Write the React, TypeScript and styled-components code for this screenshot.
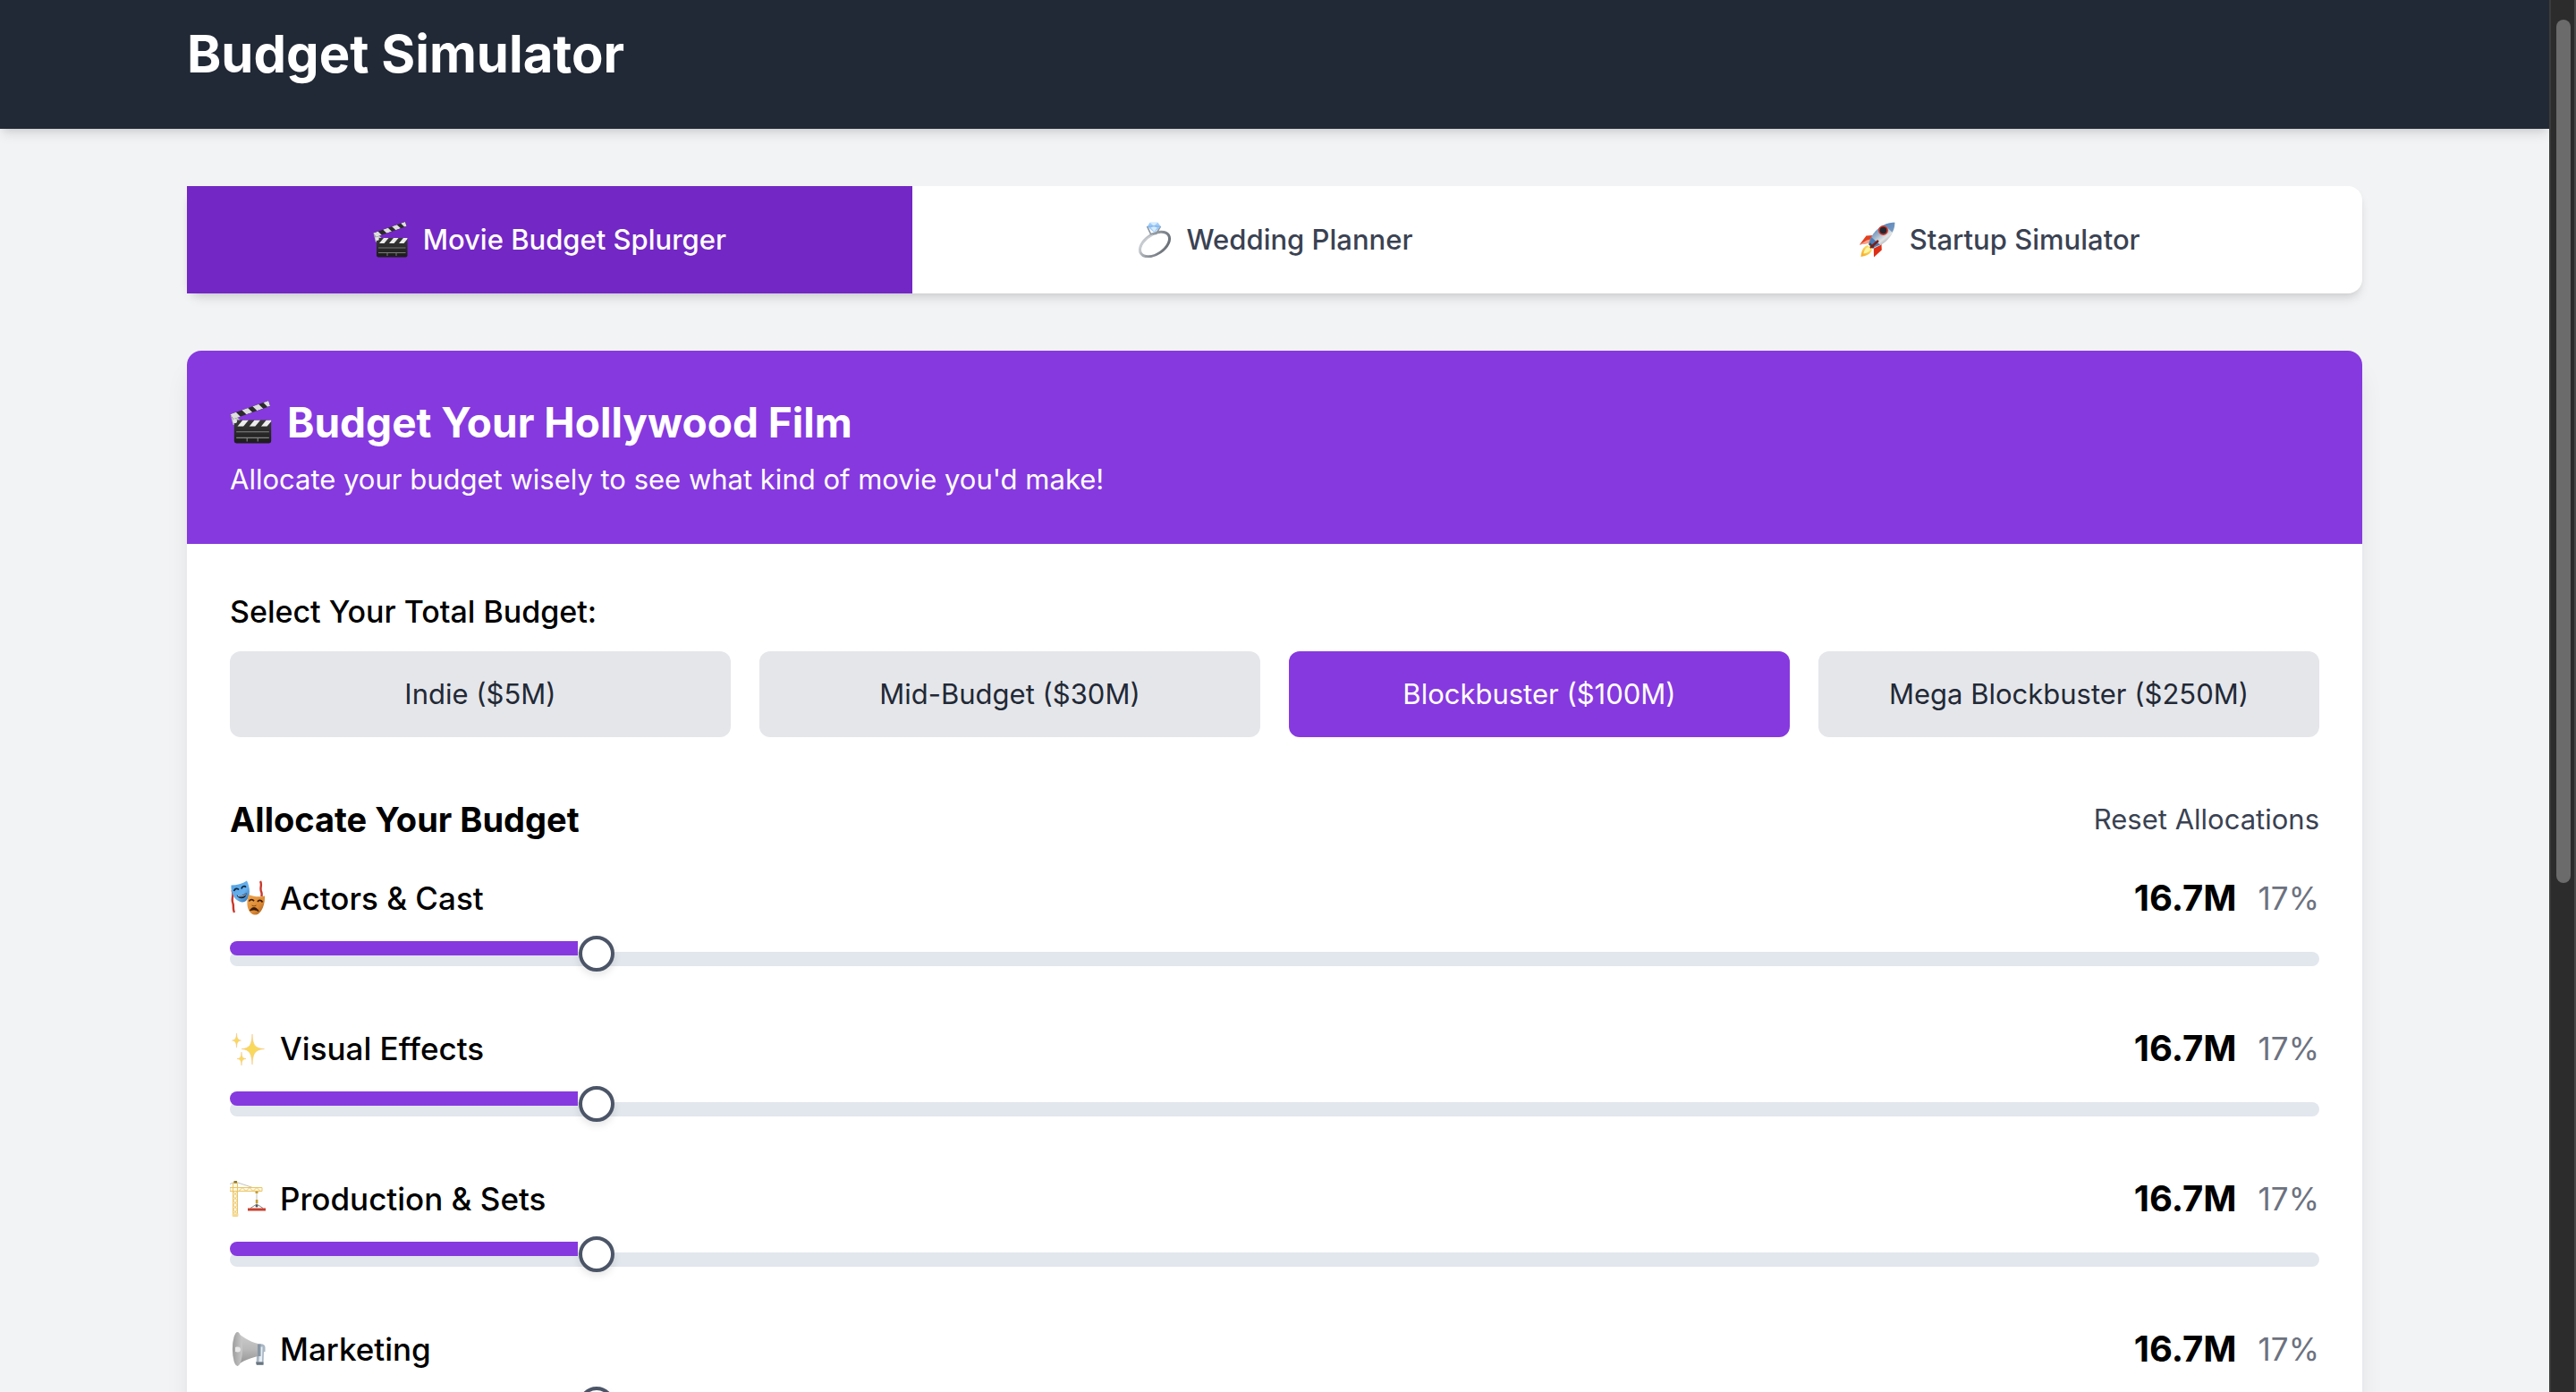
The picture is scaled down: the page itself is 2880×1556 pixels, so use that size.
import React from "react";
import styled, { createGlobalStyle } from "styled-components";

const GlobalStyle = createGlobalStyle`
  *, *::before, *::after { box-sizing: border-box; }
  html, body { margin: 0; padding: 0; }
  body {
    background: #f2f3f5;
    font-family: Inter, "Noto Sans", sans-serif;
    font-size: 31px;
    line-height: 48px;
    color: #000;
    -webkit-font-smoothing: antialiased;
  }
  button { font: inherit; border: 0; cursor: pointer; }
  h1, h2, h3, p { margin: 0; }
`;

const Shell = styled.div`
  display: flex;
  height: 100vh;
  overflow: hidden;
`;

const Page = styled.div`
  flex: 1;
  min-width: 0;
  overflow: hidden;
`;

const ScrollTrack = styled.div`
  flex: none;
  width: 30px;
  padding: 22px 4px 0 6px;
  background: #2c2c2c;
  border-left: 2px solid #3b3b3b;
  border-right: 2px solid #484848;
`;

const ScrollThumb = styled.div`
  width: 16px;
  height: 62vh;
  border-radius: 8px;
  background: #6b6b6b;
`;

const Container = styled.div`
  max-width: 2560px;
  margin: 0 auto;
  padding: 0 64px;
`;

const Header = styled.header`
  padding: 24px 0 48px;
  background: #222936;
  box-shadow: 0 8px 12px -2px rgba(0, 0, 0, 0.1), 0 4px 8px -4px rgba(0, 0, 0, 0.1);
`;

const SiteTitle = styled.h1`
  font-size: 58px;
  line-height: 72px;
  font-weight: 700;
  color: #fff;
`;

const Main = styled(Container)`
  padding-top: 64px;
  padding-bottom: 64px;
`;

const Tabs = styled.nav`
  display: grid;
  grid-template-columns: repeat(3, 1fr);
  margin-bottom: 64px;
  border-radius: 16px;
  background: #fff;
  box-shadow: 0 8px 12px -2px rgba(0, 0, 0, 0.1), 0 4px 8px -4px rgba(0, 0, 0, 0.1);
`;

const Tab = styled.button<{ $active?: boolean }>`
  display: flex;
  align-items: center;
  justify-content: center;
  gap: 16px;
  padding: 32px;
  line-height: 56px;
  font-weight: 500;
  background: ${(p) => (p.$active ? "#7327c4" : "transparent")};
  color: ${(p) => (p.$active ? "#fff" : "#3a4252")};
`;

const Card = styled.section`
  border-radius: 16px;
  overflow: hidden;
  background: #fff;
  box-shadow: 0 20px 30px -6px rgba(0, 0, 0, 0.1), 0 8px 12px -8px rgba(0, 0, 0, 0.1);
`;

const CardHeader = styled.div`
  padding: 48px;
  background: #8639df;
  color: #fff;
`;

const CardTitle = styled.h2`
  display: flex;
  align-items: center;
  gap: 16px;
  margin-bottom: 8px;
  font-size: 46px;
  line-height: 64px;
  font-weight: 700;
`;

const CardBody = styled.div`
  padding: 48px;
`;

const BudgetGroup = styled.div`
  margin-bottom: 64px;
`;

const FieldTitle = styled.h3`
  margin-bottom: 16px;
  font-size: 34px;
  line-height: 56px;
  font-weight: 500;
`;

const BudgetGrid = styled.div`
  display: grid;
  grid-template-columns: repeat(4, 1fr);
  gap: 32px;
`;

const BudgetButton = styled.button<{ $active?: boolean }>`
  padding: 24px;
  border-radius: 12px;
  line-height: 48px;
  background: ${(p) => (p.$active ? "#8639df" : "#e5e6ea")};
  color: ${(p) => (p.$active ? "#fff" : "#222936")};
`;

const SectionHead = styled.div`
  display: flex;
  align-items: center;
  justify-content: space-between;
  margin-bottom: 32px;
`;

const SectionTitle = styled.h3`
  font-size: 38px;
  line-height: 56px;
  font-weight: 700;
`;

const ResetButton = styled.button`
  padding: 0;
  line-height: 48px;
  background: none;
  color: #3a4252;
`;

const Row = styled.div`
  margin-bottom: 48px;
`;

const RowHead = styled.div`
  display: flex;
  align-items: center;
  justify-content: space-between;
  line-height: 56px;
`;

const RowLabel = styled.label`
  display: flex;
  align-items: center;
  gap: 16px;
  font-size: 35px;
  font-weight: 500;
`;

const RowValues = styled.div`
  display: flex;
  align-items: center;
  gap: 24px;
`;

const Amount = styled.span`
  font-size: 40px;
  font-weight: 700;
`;

const Percent = styled.span`
  font-size: 35px;
  color: #6c7280;
`;

const SliderWrap = styled.div`
  position: relative;
  height: 64px;
  padding-top: 32px;
`;

const Fill = styled.div`
  position: absolute;
  top: 20px;
  left: 0;
  height: 16px;
  border-radius: 8px 0 0 8px;
  background: #8639df;
  pointer-events: none;
`;

const Slider = styled.input`
  display: block;
  width: 100%;
  height: 16px;
  margin: 0;
  appearance: none;
  border-radius: 8px;
  background: #e2e7ee;
  outline: none;

  &::-webkit-slider-runnable-track {
    height: 16px;
    background: transparent;
  }

  &::-webkit-slider-thumb {
    appearance: none;
    width: 40px;
    height: 40px;
    margin-top: -18px;
    border: 4px solid #4b5567;
    border-radius: 50%;
    background: #fff;
    box-shadow: 0 4px 8px rgba(0, 0, 0, 0.1);
  }
`;

const Svg = styled.svg<{ $size?: number }>`
  flex: none;
  display: block;
  width: ${(p) => p.$size || 40}px;
  height: ${(p) => p.$size || 40}px;
`;

function Clapper({ size = 40, id }: { size?: number; id: string }) {
  return (
    <Svg $size={size} viewBox="0 0 40 40" aria-hidden="true">
      <defs>
        <linearGradient id={id} x1="0" y1="0" x2="0" y2="1">
          <stop offset="0" stopColor="#3a3a3a" />
          <stop offset="0.5" stopColor="#2a2a2a" />
          <stop offset="1" stopColor="#1c1c1c" />
        </linearGradient>
        <clipPath id={id + "a"}><path d="M0.500 12.500L36 0l1.500 5L3 17z" /></clipPath>
        <clipPath id={id + "b"}><path d="M3 18h35.500v6H3z" /></clipPath>
      </defs>
      <path d="M0.500 12.500l5 1.500 5 5L8 23l-5-.5z" fill="#c4c6c8" />
      <g clipPath={`url(#${id}a)`}>
        <path d="M0 0h40v20H0z" fill="#2b2b2b" />
        <path d="M0 12.500l5.500-2 4.500 4.500-6 3zM11 8.500l5.500-2 4.500 4.300-5.500 2zM21 5l5.500-2 4.500 4.300-5.500 2zM31 1.500l5-1.800 2 5.300-3 .6z" fill="#dedede" />
      </g>
      <rect x="4" y="18" width="34.500" height="21.500" rx="2" fill={`url(#${id})`} />
      <g clipPath={`url(#${id}b)`}>
        <path d="M7 24l5-6h5.500l-5 6zM18 24l5-6h5.500l-5 6zM29 24l5-6h5.500l-5 6z" fill="#ededed" />
      </g>
      <path d="M6 29h30.500M6 34.500h30.500M16 35v3M26 35v3" stroke="#858585" strokeWidth="0.900" />
      <circle cx="4.800" cy="19" r="2" fill="#e6e6e6" />
    </Svg>
  );
}

function Ring() {
  return (
    <Svg viewBox="0 0 40 40" aria-hidden="true">
      <defs>
        <linearGradient id="ringMetal" x1="0" y1="0" x2="1" y2="1">
          <stop offset="0" stopColor="#d9dde1" />
          <stop offset="0.500" stopColor="#8c9299" />
          <stop offset="1" stopColor="#5f656c" />
        </linearGradient>
      </defs>
      <ellipse cx="20" cy="25" rx="18.500" ry="11" transform="rotate(-34 20 25)" fill="none" stroke="url(#ringMetal)" strokeWidth="3" />
      <path d="M3.500 34C2 28 9 19 18 14.500" fill="none" stroke="#c9cdd2" strokeWidth="1.600" />
      <path d="M11.500 5l4 8.500h6L26.500 5" fill="none" stroke="#8d959e" strokeWidth="1.600" />
      <path d="M14.500 0.800h9l3.200 4.500-7.300 6.800-7.600-6.800z" fill="#9fcbf8" />
      <path d="M14.500 0.800l4.500 4 4.500-4zM19 4.800l3.500 1.700-3 4.500-3.800-4.500z" fill="#d6ecff" />
      <path d="M11.800 5.300l7.200-.5 7.700.5" fill="none" stroke="#6fa7e6" strokeWidth="0.800" />
    </Svg>
  );
}

function Rocket() {
  return (
    <Svg viewBox="0 0 40 40" aria-hidden="true">
      <defs>
        <linearGradient id="rocketBody" x1="0.200" y1="0.100" x2="0.800" y2="0.900">
          <stop offset="0" stopColor="#3f74b8" />
          <stop offset="0.400" stopColor="#9fb4c9" />
          <stop offset="0.650" stopColor="#e4e6e6" />
          <stop offset="1" stopColor="#77808a" />
        </linearGradient>
        <linearGradient id="rocketFlame" x1="1" y1="0" x2="0" y2="1">
          <stop offset="0" stopColor="#fff07a" />
          <stop offset="1" stopColor="#f5a623" />
        </linearGradient>
      </defs>
      <path d="M15 15L7.500 15.500 0 25.500l11-2z" fill="#e2401f" />
      <path d="M0 25.500l8-5 4-1-1.500 4.500z" fill="#f7a08a" />
      <path d="M24.500 25l.3 6.500L16 39.500l-.2-10z" fill="#dd2f16" />
      <path d="M9 26c-5 2-7 6.500-7.500 13C8 38 12.500 36 14 31z" fill="url(#rocketFlame)" />
      <path d="M9.500 28c-3 1.500-4.500 4-5 7.500 4-.5 6.500-2 7.800-4.800z" fill="#fff6a0" />
      <path d="M39.300.7C30 .5 19 6 13 17l-3 8 5 5 8.500-4C34 20 39.800 10 39.300.7z" fill="url(#rocketBody)" />
      <path d="M39.300.7C35.500.6 31.500 1.500 28 3.200l8.500 8.500C38.500 8.300 39.500 4.500 39.300.7z" fill="#5584ba" opacity="0.750" />
      <path d="M13 17l-2.500 7 4.500 5 8-3.500z" fill="#4a7db8" />
      <circle cx="26.500" cy="9.500" r="5.400" fill="#c9352b" />
      <circle cx="26.500" cy="9.500" r="3.800" fill="#222831" />
      <path d="M10 25l2-1.500 4.500 4.500L15 30z" fill="#37414d" />
      <path d="M21 21L12 29" stroke="#7c1f16" strokeWidth="2.400" />
    </Svg>
  );
}

function Masks() {
  return (
    <Svg viewBox="0 0 40 40" aria-hidden="true">
      <defs>
        <linearGradient id="maskBlue" x1="0" y1="0" x2="1" y2="1">
          <stop offset="0" stopColor="#4f9fe0" />
          <stop offset="0.600" stopColor="#69b2ee" />
          <stop offset="1" stopColor="#2c6aa8" />
        </linearGradient>
        <linearGradient id="maskGold" x1="0" y1="0" x2="1" y2="1">
          <stop offset="0" stopColor="#f0a64c" />
          <stop offset="0.600" stopColor="#dc8a35" />
          <stop offset="1" stopColor="#9c5518" />
        </linearGradient>
      </defs>
      <path d="M2.500 11c2.500 6-1.500 10 1 15 1 3-.5 6 1.500 10M34 1c2.500 4-1 8 1.200 12 .8 2 .3 3 .3 5" fill="none" stroke="#c9392c" strokeWidth="2.400" />
      <path d="M1.500 5.500C8 5.500 14 4 19 .5c3.500 7 4.500 17-1 22.500-2 1.700-5 1.800-7.500.5C3.500 20.500 1 12.500 1.500 5.500z" fill="url(#maskBlue)" />
      <path d="M4.500 12c1-3 4-3.500 5.500-1.500M13 9.500c.5-3 3.500-3.800 5-1.800" fill="none" stroke="#10243a" strokeWidth="1.700" />
      <path d="M7.500 16.500c4 1.500 8 .5 11-2.500 0 4-2 6-5 6.200-3 .2-5-1.200-6-3.700z" fill="#14253a" />
      <path d="M9 17.500c3.500 1 6.500.2 9-1.800" fill="none" stroke="#e8f3fd" strokeWidth="0.800" />
      <path d="M21 16c6 2.500 12 3 18 1.500.5 7-1.500 15-6.500 19.500-2.500 2-6 2-8.500 0-5.500-4.500-5.500-14-3-21z" fill="url(#maskGold)" />
      <path d="M21.500 23.500c1-2.500 4-2.500 5.500-.3M31 24c1.200-2.300 4.200-2 5.500.5" fill="none" stroke="#3a1b06" strokeWidth="1.700" />
      <path d="M22.500 34c1-4.500 7.500-5 9.500.5-3.200-1.800-6.200-2-9.500-.5z" fill="#3a1b06" stroke="#3a1b06" strokeWidth="0.800" />
      <path d="M24.500 28l2.500 1 2.500-1" fill="none" stroke="#8b4c14" strokeWidth="1" />
    </Svg>
  );
}

function Sparkles() {
  return (
    <Svg viewBox="0 0 40 40" aria-hidden="true">
      <g fill="#f9d95c" stroke="#f4c07a" strokeWidth="0.500">
        <path d="M25 4c.7 12 2.500 15.700 13.500 16.500C27.500 21.300 25.700 26 25 38c-.7-12-2.500-16.700-12-17.500C22.500 19.700 24.300 16 25 4z" />
        <path d="M7.500 3c.4 5.500 1.200 7.600 5 8-3.800.4-4.600 2.500-5 8-.4-5.500-1.200-7.600-5-8 3.800-.4 4.600-2.500 5-8z" />
        <path d="M13 24c.4 5.500 1.200 7.100 5 7.500-3.800.4-4.600 2-5 7.500-.4-5.500-1.200-7.100-5-7.500 3.800-.4 4.600-2 5-7.500z" />
      </g>
    </Svg>
  );
}

function Crane() {
  return (
    <Svg viewBox="0 0 40 40" aria-hidden="true">
      <path d="M0 3.500L6 1l24 8" fill="none" stroke="#a9a9a2" strokeWidth="0.700" />
      <path d="M3.500 2.500h5v37h-5zM0 7.500h36v4H0z" fill="#fff8e0" stroke="#ebc566" strokeWidth="1" />
      <path d="M3.500 12l5 5-5 5 5 5-5 5 5 5M8.500 12l-5 5 5 5-5 5 5 5-5 5M10 11.500l4-4 4 4 4-4 4 4 4-4 4 4" fill="none" stroke="#e6bf60" strokeWidth="0.900" />
      <path d="M2.500 36.500h7v3h-7z" fill="#f5dc9a" />
      <path d="M4.500 0h3.500v2.500H4.500z" fill="#8e7a2e" />
      <path d="M30 12v15" stroke="#c3c3be" strokeWidth="1" />
      <path d="M28.500 11.500h3V14h-3zM28.800 21h2.600v4h-2.600z" fill="#c79c2e" />
      <path d="M30 26l-7 4.500M30 26l7 4.500" stroke="#666" strokeWidth="0.800" />
      <circle cx="30" cy="28" r="1.500" fill="#4d5660" />
      <path d="M20 30.500h20v3H20z" fill="#c8402e" />
    </Svg>
  );
}

function Megaphone() {
  return (
    <Svg viewBox="0 0 40 40" aria-hidden="true">
      <defs>
        <linearGradient id="hornBody" x1="0" y1="0" x2="0" y2="1">
          <stop offset="0" stopColor="#cfcfcf" />
          <stop offset="0.500" stopColor="#b9b9b9" />
          <stop offset="1" stopColor="#8f8f8f" />
        </linearGradient>
        <linearGradient id="hornBell" x1="0" y1="0" x2="1" y2="0">
          <stop offset="0" stopColor="#9d9d9d" />
          <stop offset="1" stopColor="#c9c9c9" />
        </linearGradient>
      </defs>
      <path d="M31 14.500c5-1 8.500 0 8.500 3.500v5h-1.500l-.5 14.500h-8L30 27z" fill="#a9b7c4" />
      <path d="M33.500 17.500h3l-.6 17h-3.400z" fill="#e6eef5" />
      <path d="M29 34.500h8.500v3.300H30z" fill="#68747f" />
      <path d="M8 1c4 4 14 11 23.500 13v14C23 30 12 34 8 39z" fill="url(#hornBody)" />
      <ellipse cx="8.500" cy="20" rx="5.600" ry="19" fill="url(#hornBell)" />
      <path d="M6 18c4-1 6 0 6 2.500s-2 3.500-6 2.500z" fill="#e8e8e8" />
      <path d="M31 14.500h3.500v13.500H31z" fill="#8796a4" />
    </Svg>
  );
}

const tabs = [
  { label: "Movie Budget Splurger", icon: <Clapper id="clapTab" />, active: true },
  { label: "Wedding Planner", icon: <Ring /> },
  { label: "Startup Simulator", icon: <Rocket /> },
];

const budgets = [
  { label: "Indie ($5M)" },
  { label: "Mid-Budget ($30M)" },
  { label: "Blockbuster ($100M)", active: true },
  { label: "Mega Blockbuster ($250M)" },
];

const TOTAL = 100;
const categories = [
  { id: "actors", label: "Actors & Cast", icon: <Masks />, amount: 16.67 },
  { id: "vfx", label: "Visual Effects", icon: <Sparkles />, amount: 16.67 },
  { id: "sets", label: "Production & Sets", icon: <Crane />, amount: 16.67 },
  { id: "marketing", label: "Marketing", icon: <Megaphone />, amount: 16.67 },
];

export default function App() {
  return (
    <>
      <GlobalStyle />
      <Shell>
        <Page>
          <Header>
            <Container>
              <SiteTitle>Budget Simulator</SiteTitle>
            </Container>
          </Header>
          <Main as="main">
            <Tabs>
              {tabs.map((t) => (
                <Tab key={t.label} type="button" $active={t.active}>
                  {t.icon}
                  <span>{t.label}</span>
                </Tab>
              ))}
            </Tabs>
            <Card>
              <CardHeader>
                <CardTitle>
                  <Clapper size={48} id="clapTitle" />
                  <span>Budget Your Hollywood Film</span>
                </CardTitle>
                <p>Allocate your budget wisely to see what kind of movie you'd make!</p>
              </CardHeader>
              <CardBody>
                <BudgetGroup>
                  <FieldTitle>Select Your Total Budget:</FieldTitle>
                  <BudgetGrid>
                    {budgets.map((b) => (
                      <BudgetButton key={b.label} type="button" $active={b.active}>
                        {b.label}
                      </BudgetButton>
                    ))}
                  </BudgetGrid>
                </BudgetGroup>
                <SectionHead>
                  <SectionTitle>Allocate Your Budget</SectionTitle>
                  <ResetButton type="button">Reset Allocations</ResetButton>
                </SectionHead>
                {categories.map((c) => {
                  const share = (c.amount / TOTAL) * 100;
                  return (
                    <Row key={c.id}>
                      <RowHead>
                        <RowLabel htmlFor={c.id}>
                          {c.icon}
                          <span>{c.label}</span>
                        </RowLabel>
                        <RowValues>
                          <Amount>{c.amount.toFixed(1)}M</Amount>
                          <Percent>{Math.round(share)}%</Percent>
                        </RowValues>
                      </RowHead>
                      <SliderWrap>
                        <Slider
                          id={c.id}
                          type="range"
                          min={0}
                          max={TOTAL}
                          defaultValue={Math.round(c.amount)}
                        />
                        <Fill style={{ width: `${share}%` }} />
                      </SliderWrap>
                    </Row>
                  );
                })}
              </CardBody>
            </Card>
          </Main>
        </Page>
        <ScrollTrack aria-hidden="true">
          <ScrollThumb />
        </ScrollTrack>
      </Shell>
    </>
  );
}
